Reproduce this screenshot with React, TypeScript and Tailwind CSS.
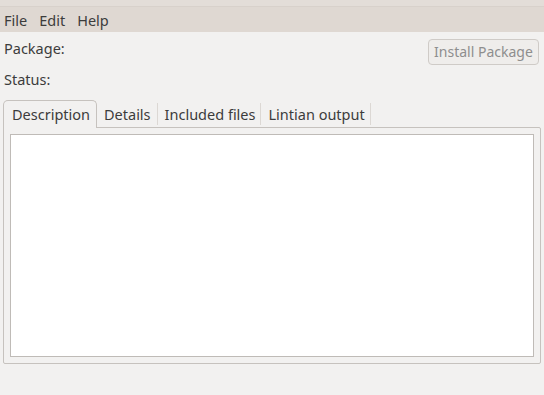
import React from "react";

export default function App() {
  const font = { fontFamily: '"Noto Sans", "DejaVu Sans", sans-serif' };
  const tabs = ["Details", "Included files", "Lintian output"];
  return (
    <div className="w-[544px] h-[395px] bg-[#f2f1f0] text-[#3c3c3c] text-[14.5px] flex flex-col overflow-hidden" style={font}>
      <div className="h-[32px] bg-[#dfd8d2] flex flex-col">
        <div className="h-[7px] bg-[#e3ddd8] border-b border-[#d8d1cb]" />
        <div className="flex items-center h-[25px] pl-[4px] gap-[12px] leading-none pt-[2px]">
          <span>File</span>
          <span>Edit</span>
          <span>Help</span>
        </div>
      </div>
      <div className="flex pl-[4px] pr-[5px] pt-[7px]">
        <div className="flex-1 flex flex-col">
          <div className="h-[18px] flex items-center leading-none">Package:</div>
          <div className="h-[18px] flex items-center mt-[13px] leading-none">Status:</div>
        </div>
        <button className="h-[26px] w-[111px] rounded-[4px] border border-[#cfcbc7] bg-[#efedeb] text-[#8e8e8e] text-[14px] leading-none flex items-center justify-center">
          Install Package
        </button>
      </div>
      <div className="flex flex-col pl-[3px] pr-[3px] mt-[12px]">
        <div className="flex h-[27px] items-end">
          <div className="w-[94px] border border-b-0 border-[#c6c2be] rounded-t-[5px] bg-[#f2f1f0] flex items-center pl-[8px] relative z-10 -mb-[1px] h-[28px] leading-none">
            Description
          </div>
          {tabs.map((t, i) => (
            <div key={t} className="h-[26px] flex items-center">
              <span className={i === 0 ? "pl-[7px] pr-[6px] leading-none" : "pl-[7px] pr-[5px] leading-none"}>{t}</span>
              <div className="w-px h-[22px] bg-[#dcd8d4]" />
            </div>
          ))}
        </div>
        <div className="h-[237px] border border-[#c6c2be] rounded-b-[2px] rounded-tr-[2px] p-[6px]">
          <div className="w-full h-full bg-white border border-[#bfbbb7]" />
        </div>
      </div>
    </div>
  );
}
